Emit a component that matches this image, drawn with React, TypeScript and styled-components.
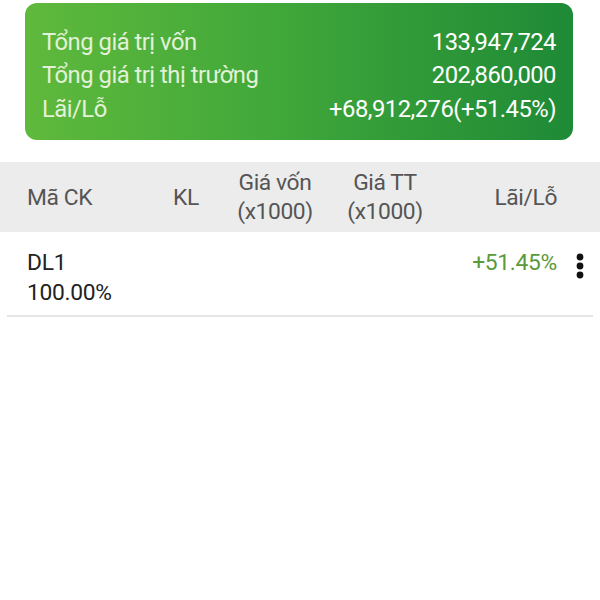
import React from "react";
import styled, { createGlobalStyle } from "styled-components";

const Global = createGlobalStyle`
  html, body { margin: 0; padding: 0; background: #fff; }
  body { font-family: Roboto, "Noto Sans", sans-serif; }
`;

const Page = styled.div`
  width: 600px;
  height: 600px;
  background: #fff;
  display: flex;
  flex-direction: column;
`;

const Card = styled.div`
  margin: 3px 27px 0 25px;
  height: 137px;
  border-radius: 12px;
  background: linear-gradient(90deg, #5fb93c 0%, #41a83a 45%, #1e8a36 100%);
  padding: 22px 17px 0 17px;
  box-sizing: border-box;
  display: flex;
  flex-direction: column;
`;

const CardRow = styled.div`
  display: flex;
  justify-content: space-between;
  align-items: center;
  height: 33.5px;
  font-size: 23.8px;
  letter-spacing: -0.5px;
`;

const Label = styled.span`
  color: #e2f1d8;
`;

const Value = styled.span`
  color: #ffffff;
`;

const Header = styled.div`
  margin-top: 22px;
  height: 70px;
  background: #ececec;
  display: grid;
  grid-template-columns: 120px 78px 100px 120px 1fr;
  align-items: center;
  padding: 0 43px 0 27px;
  color: #555;
  font-size: 22.8px;
  letter-spacing: -0.4px;
  line-height: 29px;
`;

const HCell = styled.div<{ $align?: string }>`
  text-align: ${(p) => p.$align || "left"};
  white-space: nowrap;
`;

const Row = styled.div`
  display: flex;
  margin: 0 7px;
  padding: 16px 0 0 20px;
  height: 85px;
  box-sizing: border-box;
  border-bottom: 2px solid #e6e6e6;
  font-size: 22.8px;
  letter-spacing: -0.3px;
  line-height: 30px;
`;

const Code = styled.div`
  color: #222;
  flex: 1;
`;

const Pct = styled.div`
  color: #5a9a3a;
  margin-right: 10px;
`;

const Kebab = styled.div`
  width: 26px;
  display: flex;
  justify-content: center;
  padding-top: 5px;
`;

export default function App() {
  return (
    <>
      <Global />
      <Page>
        <Card>
          <CardRow>
            <Label>Tổng giá trị vốn</Label>
            <Value>133,947,724</Value>
          </CardRow>
          <CardRow>
            <Label>Tổng giá trị thị trường</Label>
            <Value>202,860,000</Value>
          </CardRow>
          <CardRow>
            <Label>Lãi/Lỗ</Label>
            <Value>+68,912,276(+51.45%)</Value>
          </CardRow>
        </Card>
        <Header>
          <HCell>Mã CK</HCell>
          <HCell $align="center">KL</HCell>
          <HCell $align="center">Giá vốn<br />(x1000)</HCell>
          <HCell $align="center">Giá TT<br />(x1000)</HCell>
          <HCell $align="right">Lãi/Lỗ</HCell>
        </Header>
        <Row>
          <Code>DL1<br />100.00%</Code>
          <Pct>+51.45%</Pct>
          <Kebab>
            <svg width="8" height="26" viewBox="0 0 8 26">
              <circle cx="4" cy="4" r="3.4" fill="#111" />
              <circle cx="4" cy="13" r="3.4" fill="#111" />
              <circle cx="4" cy="22" r="3.4" fill="#111" />
            </svg>
          </Kebab>
        </Row>
      </Page>
    </>
  );
}
